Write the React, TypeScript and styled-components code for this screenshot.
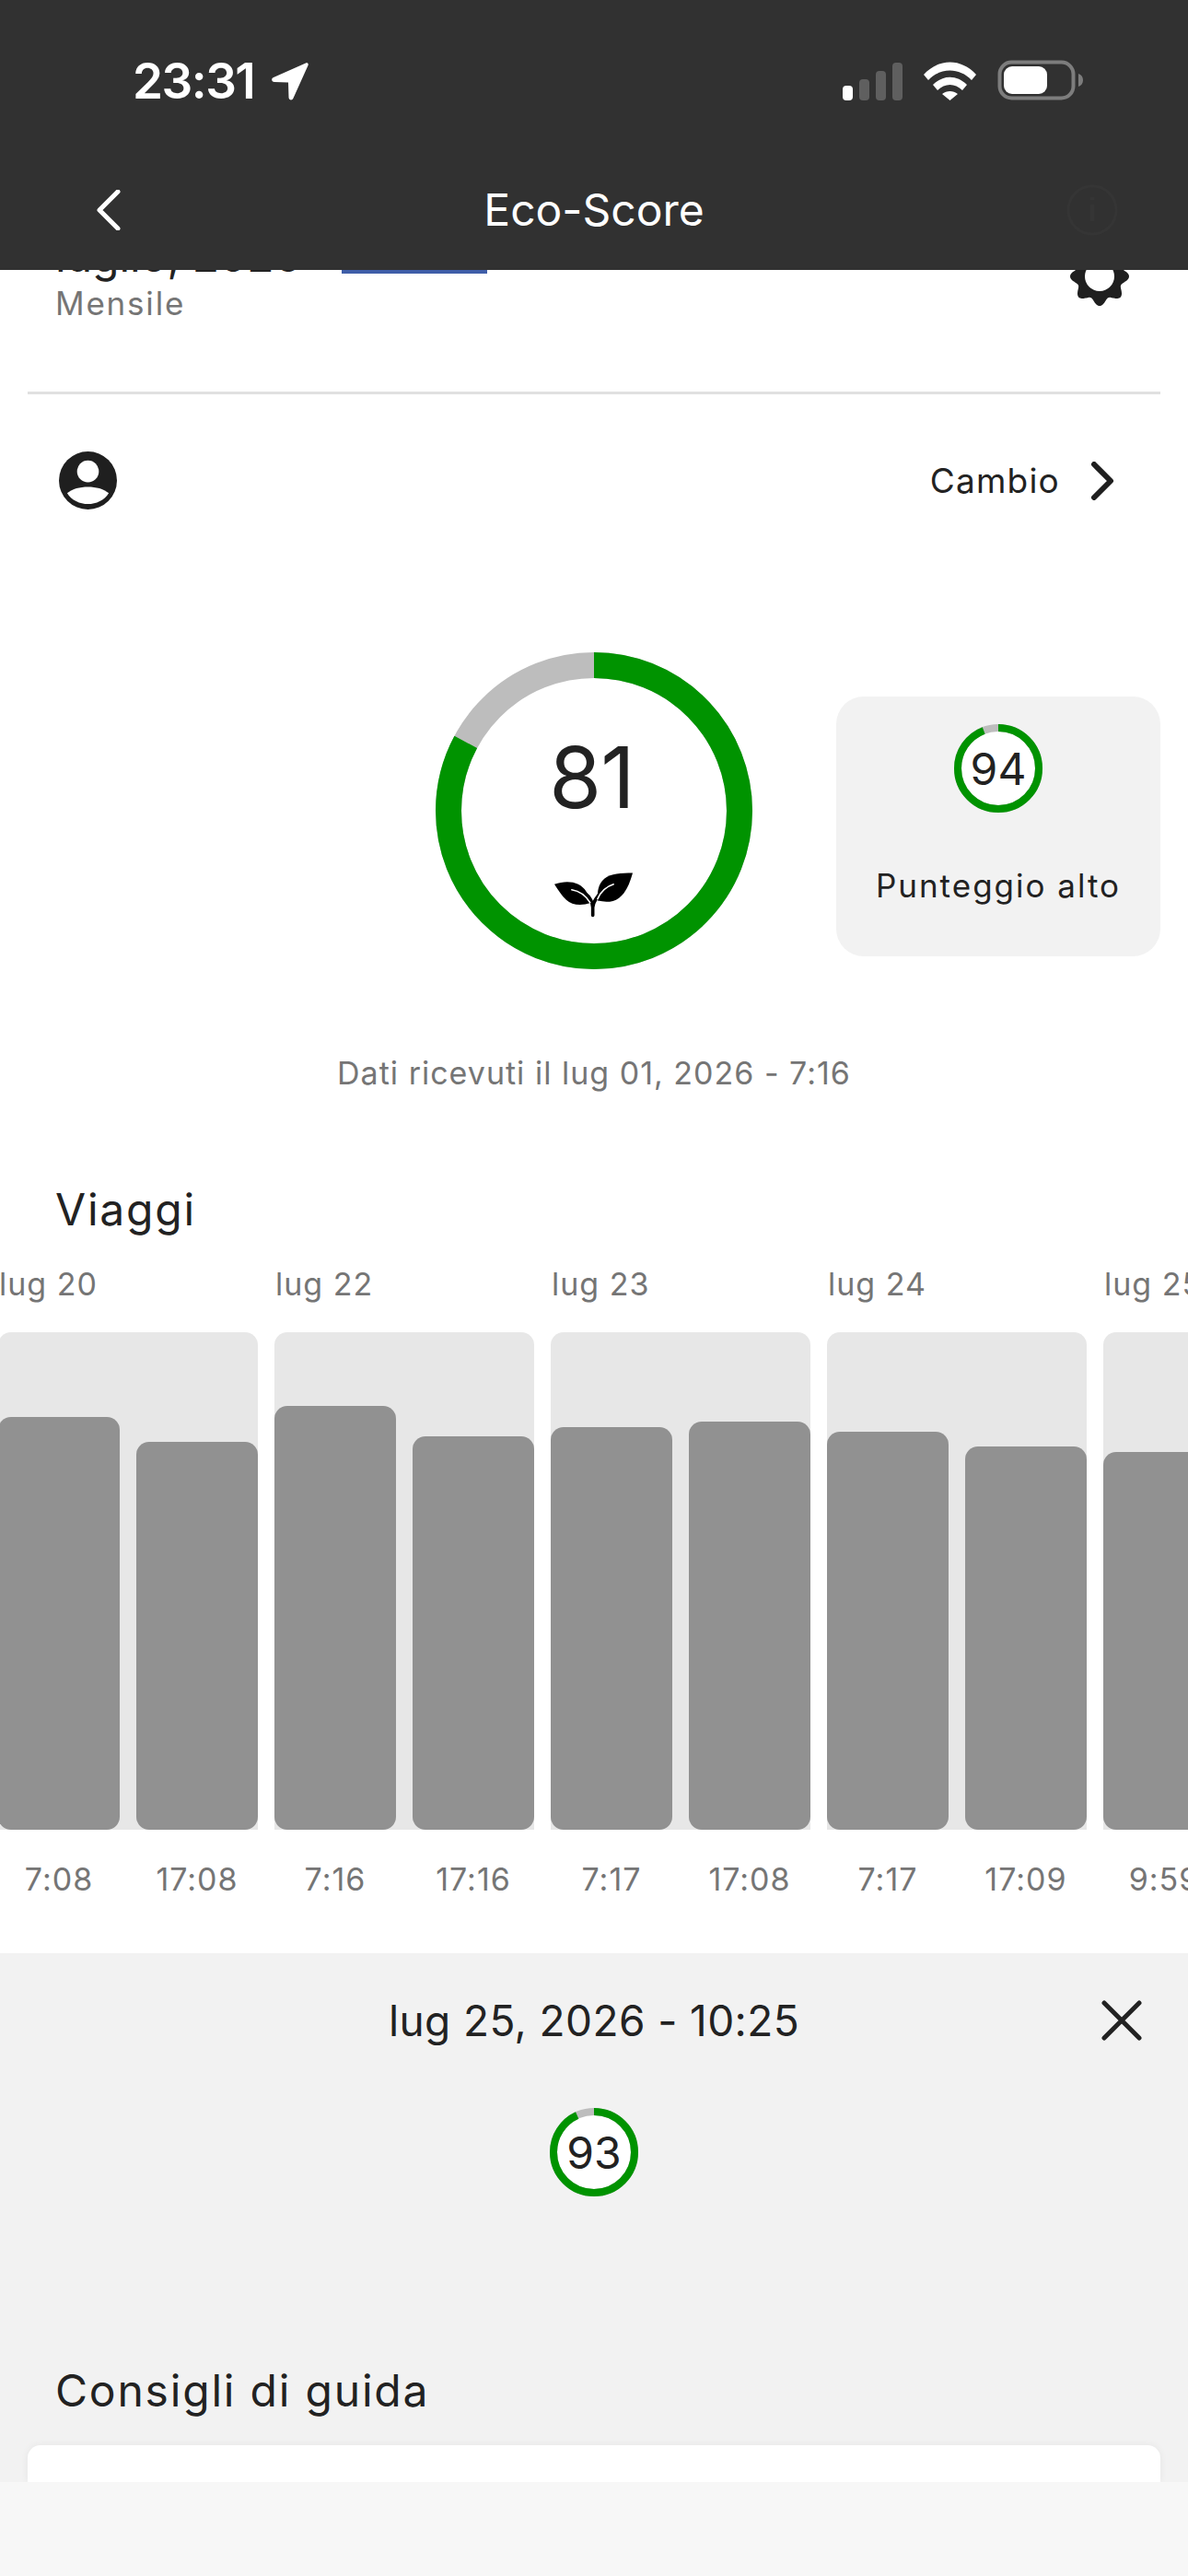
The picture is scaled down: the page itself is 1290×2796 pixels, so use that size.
import React from 'react';
import styled, { createGlobalStyle } from 'styled-components';

const GlobalStyle = createGlobalStyle`
  html, body { margin: 0; padding: 0; background: #fff; }
  * { box-sizing: border-box; }
`;

const FONT = `"Inter", "Liberation Sans", sans-serif`;

const Page = styled.div`
  width: 1290px;
  height: 2796px;
  overflow: hidden;
  display: flex;
  flex-direction: column;
  background: #fff;
  font-family: ${FONT};
  color: #222;
`;

const Header = styled.header`
  position: relative;
  z-index: 2;
  height: 293px;
  flex: none;
  background: #313131;
  color: #fff;
`;

const StatusBar = styled.div`
  height: 172px;
  padding: 65px 113px 0 144px;
  display: flex;
  justify-content: space-between;
  align-items: flex-start;
`;

const Clock = styled.div`
  margin-top: 2px;
  display: flex;
  align-items: center;
  gap: 18px;
  height: 42px;
  font-size: 53px;
  font-weight: 600;
  letter-spacing: -1.5px;
`;

const StatusIcons = styled.div`
  display: flex;
  align-items: flex-end;
  gap: 23px;
`;

const SignalBars = styled.div`
  display: flex;
  align-items: flex-end;
  gap: 7px;
`;

const SignalBar = styled.span<{ $h: number; $on?: boolean }>`
  width: 11px;
  height: ${p => p.$h}px;
  border-radius: 4px;
  background: ${p => (p.$on ? '#fff' : '#5f5f5f')};
`;

const NavBar = styled.div`
  height: 121px;
  padding: 0 74px 10px;
  display: grid;
  grid-template-columns: 1fr auto 1fr;
  align-items: center;
`;

const BackButton = styled.div`
  padding-left: 31px;
  display: flex;
`;

const NavTitle = styled.div`
  font-size: 48px;
  font-weight: 400;
`;

const NavRight = styled.div`
  justify-self: end;
  display: flex;
`;

const Period = styled.section`
  margin-top: -50px;
  height: 185px;
  padding: 0 30px;
  flex: none;
`;

const PeriodInner = styled.div`
  height: 100%;
  padding: 0 34px 0 30px;
  border-bottom: 3px solid #e0e0e0;
  display: flex;
  justify-content: space-between;
  align-items: flex-start;
`;

const PeriodDate = styled.div`
  margin-top: 7px;
  font-size: 48px;
  line-height: 56px;
  display: flex;
  gap: 44px;
`;

const PeriodLink = styled.span`
  width: 158px;
  height: 47px;
  border-bottom: 4px solid #3f5ea8;
`;

const Mensile = styled.div`
  margin-top: 1px;
  font-size: 35px;
  line-height: 44px;
  letter-spacing: 1.8px;
  color: #757575;
`;

const Gear = styled.svg`
  margin-top: 25px;
  flex: none;
`;

const DriverRow = styled.div`
  height: 187px;
  flex: none;
  padding: 0 80px 0 64px;
  display: flex;
  justify-content: space-between;
  align-items: center;
`;

const ChangeLink = styled.div`
  display: flex;
  align-items: center;
  gap: 33px;
  font-size: 37px;
  letter-spacing: 1.2px;
`;

const ScoreRow = styled.div`
  margin-top: 93px;
  flex: none;
  padding: 0 30px;
  display: grid;
  grid-template-columns: 1fr 344px 1fr;
  align-items: end;
`;

const RingWrap = styled.div<{ $size: number }>`
  position: relative;
  width: ${p => p.$size}px;
  height: ${p => p.$size}px;
  flex: none;
`;

const MainRing = styled(RingWrap)`
  grid-column: 2;
`;

const RingValue = styled.div`
  position: absolute;
  inset: 0;
  display: flex;
  align-items: center;
  justify-content: center;
  font-size: 48px;
  font-weight: 400;
  color: #222;
`;

const BigValue = styled.div`
  position: absolute;
  left: 0;
  right: 5px;
  top: 90px;
  text-align: center;
  font-size: 92px;
  line-height: 92px;
  font-weight: 400;
  letter-spacing: -1px;
  color: #222;
`;

const Leaf = styled.svg`
  position: absolute;
  left: 129px;
  top: 239px;
`;

const HighScore = styled.div`
  grid-column: 3;
  justify-self: end;
  width: 352px;
  height: 282px;
  margin-bottom: 14px;
  border-radius: 30px;
  background: #f2f2f2;
  display: flex;
  flex-direction: column;
  align-items: center;
  padding-top: 30px;
`;

const HighScoreLabel = styled.div`
  margin-top: 58px;
  font-size: 35px;
  letter-spacing: 2px;
  color: #222;
`;

const Received = styled.div`
  margin-top: 92px;
  flex: none;
  text-align: center;
  font-size: 34px;
  line-height: 42px;
  letter-spacing: 1px;
  color: #757575;
`;

const SectionTitle = styled.h2`
  margin: 0 0 0 60px;
  flex: none;
  font-size: 48px;
  line-height: 58px;
  font-weight: 400;
  letter-spacing: 1.8px;
  color: #222;
`;

const TripsTitle = styled(SectionTitle)`
  margin-top: 98px;
`;

const Chart = styled.div`
  margin: 32px 0 0 -2px;
  flex: none;
  display: flex;
  gap: 18px;
  width: 1400px;
`;

const DayGroup = styled.div`
  width: 282px;
  flex: none;
`;

const DayLabel = styled.div`
  height: 40px;
  line-height: 40px;
  font-size: 34px;
  letter-spacing: 1px;
  padding-left: 1px;
  color: #757575;
  white-space: nowrap;
`;

const DayPlot = styled.div`
  margin-top: 32px;
  height: 540px;
  border-radius: 14px 14px 0 0;
  background: #e7e7e7;
  display: flex;
  align-items: flex-end;
  gap: 18px;
`;

const Bar = styled.div<{ $h: number }>`
  width: 132px;
  height: ${p => p.$h}px;
  border-radius: 14px;
  background: #919191;
`;

const TimeRow = styled.div`
  margin-top: 34px;
  display: flex;
  gap: 18px;
`;

const TimeLabel = styled.div`
  width: 132px;
  text-align: center;
  font-size: 34px;
  line-height: 40px;
  letter-spacing: 1px;
  color: #757575;
`;

const Sheet = styled.section`
  margin-top: 60px;
  flex: 1;
  min-height: 0;
  overflow: hidden;
  background: #f2f2f2;
  display: flex;
  flex-direction: column;
`;

const SheetHeader = styled.div`
  margin-top: 45px;
  padding: 0 50px;
  display: grid;
  grid-template-columns: 1fr auto 1fr;
  align-items: center;
  height: 50px;
`;

const SheetTitle = styled.div`
  font-size: 46px;
  letter-spacing: 0.4px;
  color: #222;
`;

const CloseButton = styled.div`
  justify-self: end;
  display: flex;
`;

const SheetRing = styled.div`
  margin-top: 73px;
  display: flex;
  justify-content: center;
`;

const TipsTitle = styled(SectionTitle)`
  margin-top: 183px;
  line-height: 56px;
`;

const TipsCard = styled.div`
  margin: 31px 30px 0;
  height: 200px;
  border-radius: 14px 14px 0 0;
  background: #fff;
  box-shadow: 0 0 8px rgba(0, 0, 0, 0.06);
`;

const BottomBar = styled.div`
  height: 102px;
  flex: none;
  position: relative;
  z-index: 1;
  background: #f7f7f7;
`;

const GREEN = '#009300';
const GREY = '#bdbdbd';

const Ring: React.FC<{ size: number; stroke: number; progress: number }> = ({ size, stroke, progress }) => {
  const r = (size - stroke) / 2;
  const c = 2 * Math.PI * r;
  return (
    <svg width={size} height={size} viewBox={`0 0 ${size} ${size}`}>
      <circle cx={size / 2} cy={size / 2} r={r} fill="#fff" stroke={GREY} strokeWidth={stroke} />
      <circle
        cx={size / 2}
        cy={size / 2}
        r={r}
        fill="none"
        stroke={GREEN}
        strokeWidth={stroke}
        strokeDasharray={`${(c * progress) / 100} ${c}`}
        transform={`rotate(-90 ${size / 2} ${size / 2})`}
      />
    </svg>
  );
};

const SmallRing: React.FC<{ score: number }> = ({ score }) => (
  <RingWrap $size={96}>
    <Ring size={96} stroke={8} progress={score} />
    <RingValue>{score}</RingValue>
  </RingWrap>
);

// eight soft lobes round a 32px centre
const gearPath = () => {
  const pts: string[] = [];
  for (let i = 0; i < 240; i++) {
    const a = (i / 240) * Math.PI * 2;
    const r = 28.5 + 3.5 * Math.cos(8 * a);
    pts.push(`${(32 + r * Math.cos(a)).toFixed(2)} ${(32 + r * Math.sin(a)).toFixed(2)}`);
  }
  return `M${pts.join('L')}Z`;
};

const days = [
  { label: 'lug 20', bars: [{ h: 448, t: '7:08' }, { h: 421, t: '17:08' }] },
  { label: 'lug 22', bars: [{ h: 460, t: '7:16' }, { h: 427, t: '17:16' }] },
  { label: 'lug 23', bars: [{ h: 437, t: '7:17' }, { h: 443, t: '17:08' }] },
  { label: 'lug 24', bars: [{ h: 432, t: '7:17' }, { h: 416, t: '17:09' }] },
  { label: 'lug 25', bars: [{ h: 410, t: '9:59' }, { h: 410, t: '10:25' }] },
];

export default function App() {
  return (
    <Page>
      <GlobalStyle />
      <Header>
        <StatusBar>
          <Clock>
            23:31
            <svg width="41" height="42" viewBox="0 0 41 42">
              <path d="M38 1.5 3 17c-3 1.400-2 5 1 5l15 .5.500 16c0 3.500 4 4 5 1L40.500 4c.8-2-.6-3.300-2.500-2.500Z" fill="#fff" />
            </svg>
          </Clock>
          <StatusIcons>
            <SignalBars>
              <SignalBar $h={16} $on />
              <SignalBar $h={23} />
              <SignalBar $h={32} />
              <SignalBar $h={41} />
            </SignalBars>
            <svg width="57" height="42" viewBox="0 0 57 42">
              <path d="M0 14C16-4 41-4 57 14l-5 6C39 6 18 6 5 20Z M10 25c11-11 26-11 37 0l-5 6c-8-8-19-8-27 0Z M20 35c5-4 12-4 17 0l-8.500 7Z" fill="#fff" />
            </svg>
            <svg width="94" height="44" viewBox="0 0 94 44">
              <rect x="2.500" y="2.500" width="80" height="39" rx="13" fill="none" stroke="#7d7d7d" strokeWidth="4" />
              <rect x="7" y="7" width="47" height="30" rx="9" fill="#fff" />
              <path d="M88 15c3 1 5 3.500 5 7s-2 6-5 7Z" fill="#7d7d7d" />
            </svg>
          </StatusIcons>
        </StatusBar>
        <NavBar>
          <BackButton>
            <svg width="26" height="44" viewBox="0 0 26 44">
              <path d="M23 2 3 22l20 20" fill="none" stroke="#fff" strokeWidth="5" strokeLinecap="round" strokeLinejoin="round" />
            </svg>
          </BackButton>
          <NavTitle>Eco-Score</NavTitle>
          <NavRight>
            <svg width="60" height="56" viewBox="0 0 60 56">
              <circle cx="30" cy="28" r="26" fill="none" stroke="#353535" strokeWidth="3" />
              <path d="M30 22v18M30 14v3" stroke="#353535" strokeWidth="5" />
            </svg>
          </NavRight>
        </NavBar>
      </Header>

      <Period>
        <PeriodInner>
          <div>
            <PeriodDate>
              luglio, 2026
              <PeriodLink />
            </PeriodDate>
            <Mensile>Mensile</Mensile>
          </div>
          <Gear width="64" height="64" viewBox="0 0 64 64">
            <path d={gearPath()} fill="#1f1f1f" />
            <circle cx="32" cy="32" r="16" fill="#fff" />
          </Gear>
        </PeriodInner>
      </Period>

      <DriverRow>
        <svg width="63" height="63" viewBox="0 0 64 64">
          <circle cx="32" cy="32" r="32" fill="#1f1f1f" />
          <circle cx="32" cy="22" r="12" fill="#fff" />
          <path d="M9 46c6-5 14-7 23-7s17 2 23 7c-5 8-14 12-23 12S14 54 9 46Z" fill="#fff" />
        </svg>
        <ChangeLink>
          Cambio
          <svg width="26" height="42" viewBox="0 0 26 42">
            <path d="M4 3l18 18L4 39" fill="none" stroke="#1f1f1f" strokeWidth="6" strokeLinecap="round" strokeLinejoin="round" />
          </svg>
        </ChangeLink>
      </DriverRow>

      <ScoreRow>
        <MainRing $size={344}>
          <Ring size={344} stroke={28} progress={82.8} />
          <BigValue>81</BigValue>
          <Leaf width="85" height="49" viewBox="98 85 257 145">
            <path d="M98 122c40-14 85-10 105 25 6 10 11 22 14 36-30 10-62 8-80-10-16-14-26-32-39-51Z" fill="#000" />
            <path d="M355 85c-10 35-22 65-45 82-20 14-42 15-70 9-2-30 2-55 22-72 22-18 55-19 93-19Z" fill="#000" />
            <path d="M224 224v-26c0-14-10-35-24-45M224 198c0-14 14-40 36-55" fill="none" stroke="#000" strokeWidth="11" strokeLinecap="round" />
            <path d="M155 140c25 4 45 18 60 42M292 122c-25 8-42 25-52 48" fill="none" stroke="#fff" strokeWidth="5" strokeLinecap="round" />
          </Leaf>
        </MainRing>
        <HighScore>
          <SmallRing score={94} />
          <HighScoreLabel>Punteggio alto</HighScoreLabel>
        </HighScore>
      </ScoreRow>

      <Received>Dati ricevuti il lug 01, 2026 - 7:16</Received>

      <TripsTitle>Viaggi</TripsTitle>
      <Chart>
        {days.map(d => (
          <DayGroup key={d.label}>
            <DayLabel>{d.label}</DayLabel>
            <DayPlot>
              {d.bars.map(b => (
                <Bar key={b.t} $h={b.h} />
              ))}
            </DayPlot>
            <TimeRow>
              {d.bars.map(b => (
                <TimeLabel key={b.t}>{b.t}</TimeLabel>
              ))}
            </TimeRow>
          </DayGroup>
        ))}
      </Chart>

      <Sheet>
        <SheetHeader>
          <span />
          <SheetTitle>lug 25, 2026 - 10:25</SheetTitle>
          <CloseButton>
            <svg width="44" height="44" viewBox="0 0 44 44">
              <path d="M3 3l38 38M41 3 3 41" stroke="#222" strokeWidth="5" strokeLinecap="round" />
            </svg>
          </CloseButton>
        </SheetHeader>
        <SheetRing>
          <SmallRing score={93} />
        </SheetRing>
        <TipsTitle>Consigli di guida</TipsTitle>
        <TipsCard />
      </Sheet>
      <BottomBar />
    </Page>
  );
}
